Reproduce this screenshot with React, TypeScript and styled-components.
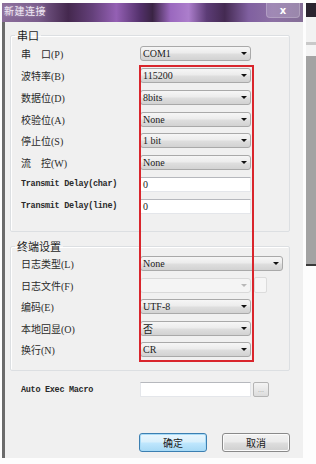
import React from 'react'
import styled, { createGlobalStyle } from 'styled-components'

const GlobalStyle = createGlobalStyle`
  html, body {
    margin: 0;
    padding: 0;
    background: #fdfdfd;
  }
  body {
    font-family: "Noto Sans CJK SC", "Liberation Sans", sans-serif;
  }
`

const Page = styled.div`
  position: relative;
  display: flex;
  align-items: flex-start;
  width: 316px;
  height: 464px;
  padding-top: 3px;
  box-sizing: border-box;
  overflow: hidden;
`

const Dialog = styled.div`
  width: 301px;
  margin-left: 2px;
  display: flex;
  flex-direction: column;
`

const TitleBar = styled.div`
  height: 19px;
  display: flex;
  align-items: flex-start;
  justify-content: space-between;
  padding-left: 2px;
  background: linear-gradient(90deg,
    #8c6e9c 0%, #7a5c8c 12%, #44284e 22%, #64407a 30%, #9460b4 38%,
    #52306a 46%, #3a2444 50%, #9a68be 56%, #ac7ecc 62%, #5c3c76 68%,
    #442a52 74%, #8060a0 82%, #8c70a4 90%, #846e96 100%);
`

const Title = styled.span`
  font-size: 10px;
  line-height: 15px;
  color: #efe6f3;
  letter-spacing: 0.5px;
  text-shadow: 0 0 3px rgba(255, 255, 255, 0.45);
`

const CloseButton = styled.div`
  width: 32px;
  height: 14px;
  margin-right: 3px;
  display: flex;
  align-items: center;
  justify-content: center;
  border: 1px solid rgba(255, 255, 255, 0.2);
  border-top: none;
  border-radius: 0 0 4px 4px;
  background: rgba(220, 210, 230, 0.25);
  color: #fff;
  font-family: "DejaVu Sans", sans-serif;
  font-size: 10px;
  font-weight: bold;
`

const Body = styled.div`
  height: 436px;
  box-sizing: border-box;
  background: #f0f0f0;
  border-left: 3px solid #6b6b6b;
  padding: 6px 0 0 5px;
  display: flex;
  flex-direction: column;
`

const Group = styled.fieldset<{ $gap?: number }>`
  width: 280px;
  box-sizing: border-box;
  margin: ${p => p.$gap ?? 0}px 0 0 0;
  padding: 0;
  border: 1px solid #dcdfe2;
  border-radius: 2px;
  box-shadow: inset 1px 1px 0 #ffffff;
`

const Legend = styled.legend`
  margin-left: 4px;
  padding: 0 2px;
  font-size: 11px;
  line-height: 14px;
  color: #1e1e1e;
`

const Rows = styled.div<{ $top: number; $bottom: number }>`
  display: flex;
  flex-direction: column;
  padding: ${p => p.$top}px 0 ${p => p.$bottom}px 10px;
`

const Row = styled.div<{ $h?: number }>`
  height: ${p => p.$h ?? 21.75}px;
  display: flex;
  align-items: center;
`

const Label = styled.span<{ $mono?: boolean }>`
  width: 119px;
  flex: none;
  font-family: ${p => (p.$mono ? '"Liberation Mono", monospace' : '"Liberation Serif", "Noto Sans CJK SC", serif')};
  font-size: ${p => (p.$mono ? '8.5px' : '10px')};
  font-weight: ${p => (p.$mono ? 'bold' : 'normal')};
  letter-spacing: ${p => (p.$mono ? '-0.3px' : '0')};
  color: #2a2a2a;
  white-space: nowrap;
`

const Combo = styled.div<{ $w?: number; $disabled?: boolean }>`
  width: ${p => p.$w ?? 111}px;
  height: 15px;
  box-sizing: border-box;
  display: flex;
  align-items: center;
  justify-content: space-between;
  padding: 0 3px 0 2px;
  border: 1px solid ${p => (p.$disabled ? '#d9d9d9' : '#a9a9a9')};
  border-radius: 3px;
  background: ${p => (p.$disabled
    ? '#f4f4f4'
    : 'linear-gradient(#f6f6f6 0%, #ececec 45%, #dedede 55%, #d2d2d2 100%)')};
  font-family: "Liberation Serif", "Noto Sans CJK SC", serif;
  font-size: 10px;
  color: #1c1c1c;
`

const Arrow = styled.span<{ $disabled?: boolean }>`
  width: 0;
  height: 0;
  border-left: 3px solid transparent;
  border-right: 3px solid transparent;
  border-top: 3px solid ${p => (p.$disabled ? '#b8b8b8' : '#111')};
`

const TextInput = styled.div`
  width: 111px;
  height: 15px;
  box-sizing: border-box;
  padding-left: 2px;
  border: 1px solid #e4e6ea;
  border-top-color: #b6b8bd;
  background: #ffffff;
  font-family: "Liberation Serif", serif;
  font-size: 10px;
  line-height: 13px;
  color: #1c1c1c;
`

const SmallButton = styled.div<{ $flat?: boolean }>`
  width: ${p => (p.$flat ? 13 : 16)}px;
  height: ${p => (p.$flat ? 16 : 15)}px;
  margin-left: ${p => (p.$flat ? 3 : 2)}px;
  box-sizing: border-box;
  border: 1px solid ${p => (p.$flat ? '#dcdcdc' : '#b4b4b4')};
  border-radius: 2px;
  background: ${p => (p.$flat ? '#f6f6f6' : 'linear-gradient(#f4f4f4, #dcdcdc)')};
  display: flex;
  align-items: center;
  justify-content: center;
  font-family: "Liberation Sans", sans-serif;
  font-size: 7px;
  color: #9a9a9a;
`

const MacroRow = styled.div`
  height: 22px;
  margin: 8px 0 0 11px;
  display: flex;
  align-items: center;
`

const ButtonBar = styled.div`
  display: flex;
  justify-content: flex-end;
  gap: 15px;
  margin: 32px 13px 0 0;
`

const Button = styled.button<{ $primary?: boolean }>`
  width: 68px;
  height: 19px;
  padding: 0;
  border: 1px solid ${p => (p.$primary ? '#3c7fb1' : '#8a8a8a')};
  border-radius: 3px;
  background: ${p => (p.$primary
    ? 'linear-gradient(#eaf6fd 0%, #d9f0fc 45%, #bee6fd 55%, #a7d9f5 100%)'
    : 'linear-gradient(#f2f2f2 0%, #ebebeb 45%, #dddddd 55%, #cfcfcf 100%)')};
  box-shadow: inset 0 0 0 1px ${p => (p.$primary ? '#a8dbf7' : '#fbfbfb')};
  font-family: "Noto Sans CJK SC", sans-serif;
  font-size: 10px;
  color: #1a1a1a;
`

const SideWindow = styled.div`
  width: 10px;
  margin-left: 3px;
  display: flex;
  flex-direction: column;
`

const SideBand = styled.div<{ $h: number; $c: string }>`
  height: ${p => p.$h}px;
  background: ${p => p.$c};
`

const RedFrame = styled.div`
  position: absolute;
  left: 139px;
  top: 65px;
  width: 115px;
  height: 297px;
  box-sizing: border-box;
  border: 2px solid #d9252c;
  pointer-events: none;
`

type Field = { label: string; value?: string; kind: 'combo' | 'text'; mono?: boolean }

const serialFields: Field[] = [
  { label: '串　口(P)', value: 'COM1', kind: 'combo' },
  { label: '波特率(B)', value: '115200', kind: 'combo' },
  { label: '数据位(D)', value: '8bits', kind: 'combo' },
  { label: '校验位(A)', value: 'None', kind: 'combo' },
  { label: '停止位(S)', value: '1 bit', kind: 'combo' },
  { label: '流　控(W)', value: 'None', kind: 'combo' },
  { label: 'Transmit Delay(char)', value: '0', kind: 'text', mono: true },
  { label: 'Transmit Delay(line)', value: '0', kind: 'text', mono: true },
]

const termFields = [
  { label: '编码(E)', value: 'UTF-8' },
  { label: '本地回显(O)', value: '否' },
  { label: '换行(N)', value: 'CR' },
]

const App: React.FC = () => {
  return <>
    <GlobalStyle />
    <Page>
      <Dialog>
        <TitleBar>
          <Title>新建连接</Title>
          <CloseButton>x</CloseButton>
        </TitleBar>
        <Body>
          <Group>
            <Legend>串口</Legend>
            <Rows $top={1} $bottom={14}>
              {serialFields.map((f, idx) =>
                <Row key={idx}>
                  <Label $mono={f.mono}>{f.label}</Label>
                  {f.kind === 'combo'
                    ? <Combo>{f.value}<Arrow /></Combo>
                    : <TextInput>{f.value}</TextInput>}
                </Row>)}
            </Rows>
          </Group>
          <Group $gap={7}>
            <Legend>终端设置</Legend>
            <Rows $top={0} $bottom={9}>
              <Row $h={21.5}>
                <Label>日志类型(L)</Label>
                <Combo $w={143}>None<Arrow /></Combo>
              </Row>
              <Row $h={21.5}>
                <Label>日志文件(F)</Label>
                <Combo $disabled><span /><Arrow $disabled /></Combo>
                <SmallButton $flat />
              </Row>
              {termFields.map((f, idx) =>
                <Row key={idx} $h={21.5}>
                  <Label>{f.label}</Label>
                  <Combo>{f.value}<Arrow /></Combo>
                </Row>)}
            </Rows>
          </Group>
          <MacroRow>
            <Label $mono>Auto Exec Macro</Label>
            <TextInput />
            <SmallButton>...</SmallButton>
          </MacroRow>
          <ButtonBar>
            <Button $primary>确定</Button>
            <Button>取消</Button>
          </ButtonBar>
        </Body>
      </Dialog>
      <SideWindow>
        <SideBand $h={14} $c="#2b2530" />
        <SideBand $h={25} $c="#f2f2f2" />
        <SideBand $h={3} $c="#c9c9c9" />
        <SideBand $h={11} $c="#f4f4f4" />
        <SideBand $h={208} $c="#a3a3a3" />
        <SideBand $h={2} $c="#3a3a3a" />
      </SideWindow>
      <RedFrame />
    </Page>
  </>
}

export default App
